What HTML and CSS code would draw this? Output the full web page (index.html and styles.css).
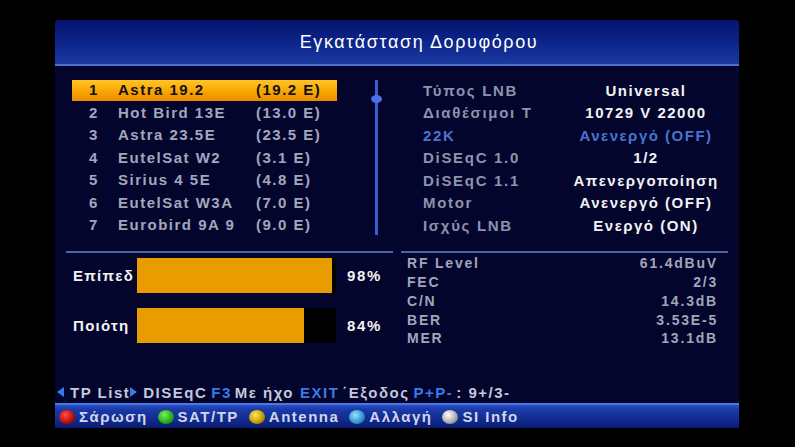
FILE: index.html
```html
<!DOCTYPE html>
<html lang="el">
<head>
<meta charset="utf-8">
<title>Εγκατάσταση Δορυφόρου</title>
<link rel="stylesheet" href="styles.css">
</head>
<body>
<div class="panel">
  <div class="header">Εγκατάσταση Δορυφόρου</div>
  <div class="main">
    <div class="top">
      <div class="list">
        <div class="row sel"><span class="num">1</span><span class="name">Astra 19.2</span><span class="deg">(19.2 E)</span></div>
        <div class="row"><span class="num">2</span><span class="name">Hot Bird 13E</span><span class="deg">(13.0 E)</span></div>
        <div class="row"><span class="num">3</span><span class="name">Astra 23.5E</span><span class="deg">(23.5 E)</span></div>
        <div class="row"><span class="num">4</span><span class="name">EutelSat W2</span><span class="deg">(3.1 E)</span></div>
        <div class="row"><span class="num">5</span><span class="name">Sirius 4 5E</span><span class="deg">(4.8 E)</span></div>
        <div class="row"><span class="num">6</span><span class="name">EutelSat W3A</span><span class="deg">(7.0 E)</span></div>
        <div class="row"><span class="num">7</span><span class="name">Eurobird 9A 9</span><span class="deg">(9.0 E)</span></div>
      </div>
      <div class="scroll"><div class="knob"></div></div>
      <div class="settings">
        <div class="srow"><span class="lbl">Τύπος LNB</span><span class="val">Universal</span></div>
        <div class="srow"><span class="lbl">Διαθέσιμοι Τ</span><span class="val">10729 V 22000</span></div>
        <div class="srow dis"><span class="lbl">22K</span><span class="val">Ανενεργό (OFF)</span></div>
        <div class="srow"><span class="lbl">DiSEqC 1.0</span><span class="val">1/2</span></div>
        <div class="srow"><span class="lbl">DiSEqC 1.1</span><span class="val">Απενεργοποίηση</span></div>
        <div class="srow"><span class="lbl">Motor</span><span class="val">Ανενεργό (OFF)</span></div>
        <div class="srow"><span class="lbl">Ισχύς LNB</span><span class="val">Ενεργό (ON)</span></div>
      </div>
    </div>
    <div class="seps"><div class="sep sep-left"></div><div class="sep sep-right"></div></div>
    <div class="signal">
      <div class="bars">
        <div class="bar"><span class="blabel">Επίπεδ</span><div class="track"><div class="fill" style="width:98%"></div></div><span class="pct">98%</span></div>
        <div class="bar"><span class="blabel">Ποιότη</span><div class="track"><div class="fill" style="width:84%"></div></div><span class="pct">84%</span></div>
      </div>
      <div class="stats">
        <div class="strow"><span>RF Level</span><span>61.4dBuV</span></div>
        <div class="strow"><span>FEC</span><span>2/3</span></div>
        <div class="strow"><span>C/N</span><span>14.3dB</span></div>
        <div class="strow"><span>BER</span><span>3.53E-5</span></div>
        <div class="strow"><span>MER</span><span>13.1dB</span></div>
      </div>
    </div>
    <div class="hint">
      <svg class="tri tri-l" width="7" height="10" viewBox="0 0 7 10"><polygon points="7,0 7,10 0,5" fill="#3a7ae8"/></svg><span class="ht h-tp">TP List</span><svg class="tri tri-r" width="7" height="10" viewBox="0 0 7 10"><polygon points="0,0 0,10 7,5" fill="#3a7ae8"/></svg><span class="ht h-dis">DISEqC</span><span class="hk">F3</span><span class="ht">Με ήχο</span><span class="hk hk-exit">EXIT</span><span class="ht">΄Εξοδος</span><span class="hk">P+P-</span><span class="ht">: 9+/3-</span>
    </div>
  </div>
  <div class="keys">
    <span class="key"><span class="dot red"></span>Σάρωση</span>
    <span class="key"><span class="dot green"></span>SAT/TP</span>
    <span class="key"><span class="dot yellow"></span>Antenna</span>
    <span class="key"><span class="dot blue"></span>Αλλαγή</span>
    <span class="key"><span class="dot grey"></span>SI Info</span>
  </div>
</div>
</body>
</html>
```

FILE: styles.css
```css
html, body {
  margin: 0;
  padding: 0;
  background: #000;
}
body {
  width: 795px;
  height: 447px;
  overflow: hidden;
  font-family: "Liberation Sans", Arial, sans-serif;
  font-weight: bold;
}
.panel {
  margin: 20px 0 0 55px;
  width: 684px;
  display: flex;
  flex-direction: column;
}
.header {
  height: 46px;
  box-sizing: border-box;
  background: linear-gradient(#06146e 0%, #0c2488 50%, #1b3aa2 100%);
  border-bottom: 2px solid #4f6fcc;
  border-radius: 3px 3px 0 0;
  color: #fff;
  font-weight: normal;
  font-size: 18px;
  letter-spacing: 1.6px;
  display: flex;
  align-items: center;
  justify-content: center;
  padding: 1px 0 0 44px;
}
.main {
  height: 337px;
  background: #03052c;
  display: flex;
  flex-direction: column;
}
.top {
  display: flex;
  padding-top: 14px;
  height: 171px;
  box-sizing: border-box;
}
.list {
  margin-left: 17px;
  width: 265px;
}
.row {
  height: 21px;
  margin-bottom: 1.5px;
  display: flex;
  align-items: center;
  font-size: 15px;
  letter-spacing: 1.5px;
  color: #a3a7bd;
  padding: 0 0 2px 17px;
  box-sizing: border-box;
}
.row.sel {
  background: linear-gradient(#ffc526 0%, #f8a700 55%, #ec8a00 100%);
  color: #111;
}
.num { width: 29px; }
.name { width: 138px; }
.scroll {
  margin-left: 38px;
  width: 3px;
  height: 155px;
  background: #3a5fd4;
  position: relative;
}
.knob {
  position: absolute;
  left: -4px;
  top: 15px;
  width: 11px;
  height: 8px;
  border-radius: 50%;
  background: #4a70e4;
}
.settings {
  margin-left: 45px;
  flex: 1;
}
.srow {
  height: 22.5px;
  display: flex;
  align-items: center;
  font-size: 15px;
  letter-spacing: 1.7px;
  padding-bottom: 2px;
  box-sizing: border-box;
}
.srow .lbl {
  width: 147px;
  color: #8d93ad;
}
.srow .val {
  width: 152px;
  text-align: center;
  color: #f2f2f4;
  letter-spacing: 1.5px;
}
.srow.dis .lbl, .srow.dis .val {
  color: #4a74cc;
}
.seps {
  display: flex;
  height: 2px;
  margin-top: 14px;
}
.sep {
  height: 2px;
  background: #4a66a6;
}
.sep-left { margin-left: 11px; width: 327px; }
.sep-right { margin-left: 8px; width: 327px; }
.signal {
  display: flex;
  height: 96px;
}
.bars {
  width: 346px;
  padding-top: 5px;
  display: flex;
  flex-direction: column;
  gap: 15px;
}
.bar {
  display: flex;
  align-items: center;
  height: 35px;
}
.blabel {
  width: 64px;
  margin-left: 18px;
  color: #f2f2f4;
  font-size: 15px;
  letter-spacing: 1.3px;
}
.track {
  width: 199px;
  height: 35px;
  background: #000;
}
.fill {
  height: 100%;
  background: #e89c00;
}
.pct {
  margin-left: 11px;
  color: #f2f2f4;
  font-size: 15px;
  letter-spacing: 1.6px;
}
.stats {
  width: 311px;
  margin-left: 6px;
  padding-top: 1px;
}
.strow {
  height: 18.75px;
  display: flex;
  align-items: center;
  justify-content: space-between;
  color: #a2a6ba;
  font-size: 14px;
  letter-spacing: 1.8px;
}
.hint {
  margin-top: 35px;
  margin-left: 2px;
  height: 16px;
  display: flex;
  align-items: center;
  font-size: 15px;
  letter-spacing: 1.5px;
  color: #c4c8dc;
  white-space: nowrap;
}
.ht { margin-left: 3px; }
.h-tp { margin-left: 6px; }
.h-dis { margin-left: 6px; }
.hk { color: #3a7ae8; margin-left: 4px; }
.hk-exit { margin-left: 6px; }
.keys {
  height: 23px;
  background: linear-gradient(#2a4ec8 0%, #1a3aa8 20%, #10288c 70%, #0a1c70 100%);
  border-top: 2px solid #4a78dc;
  display: flex;
  align-items: center;
  padding-left: 4px;
  color: #d2d6ea;
  font-size: 15px;
  letter-spacing: 1.5px;
}
.key {
  display: flex;
  align-items: center;
  margin-right: 10px;
}
.dot {
  width: 16px;
  height: 14px;
  border-radius: 50%;
  margin-right: 4px;
}
.red { background: radial-gradient(circle at 40% 35%, #ff5040, #c01010 55%, #700000); }
.green { background: radial-gradient(circle at 40% 35%, #7af060, #28b018 55%, #106000); }
.yellow { background: radial-gradient(circle at 40% 35%, #ffe860, #c8a000 55%, #705800); }
.blue { background: radial-gradient(circle at 40% 35%, #9ae0ff, #3898cc 55%, #10507a); }
.grey { background: radial-gradient(circle at 40% 35%, #ffffff, #b0b0b0 55%, #606060); }
```
